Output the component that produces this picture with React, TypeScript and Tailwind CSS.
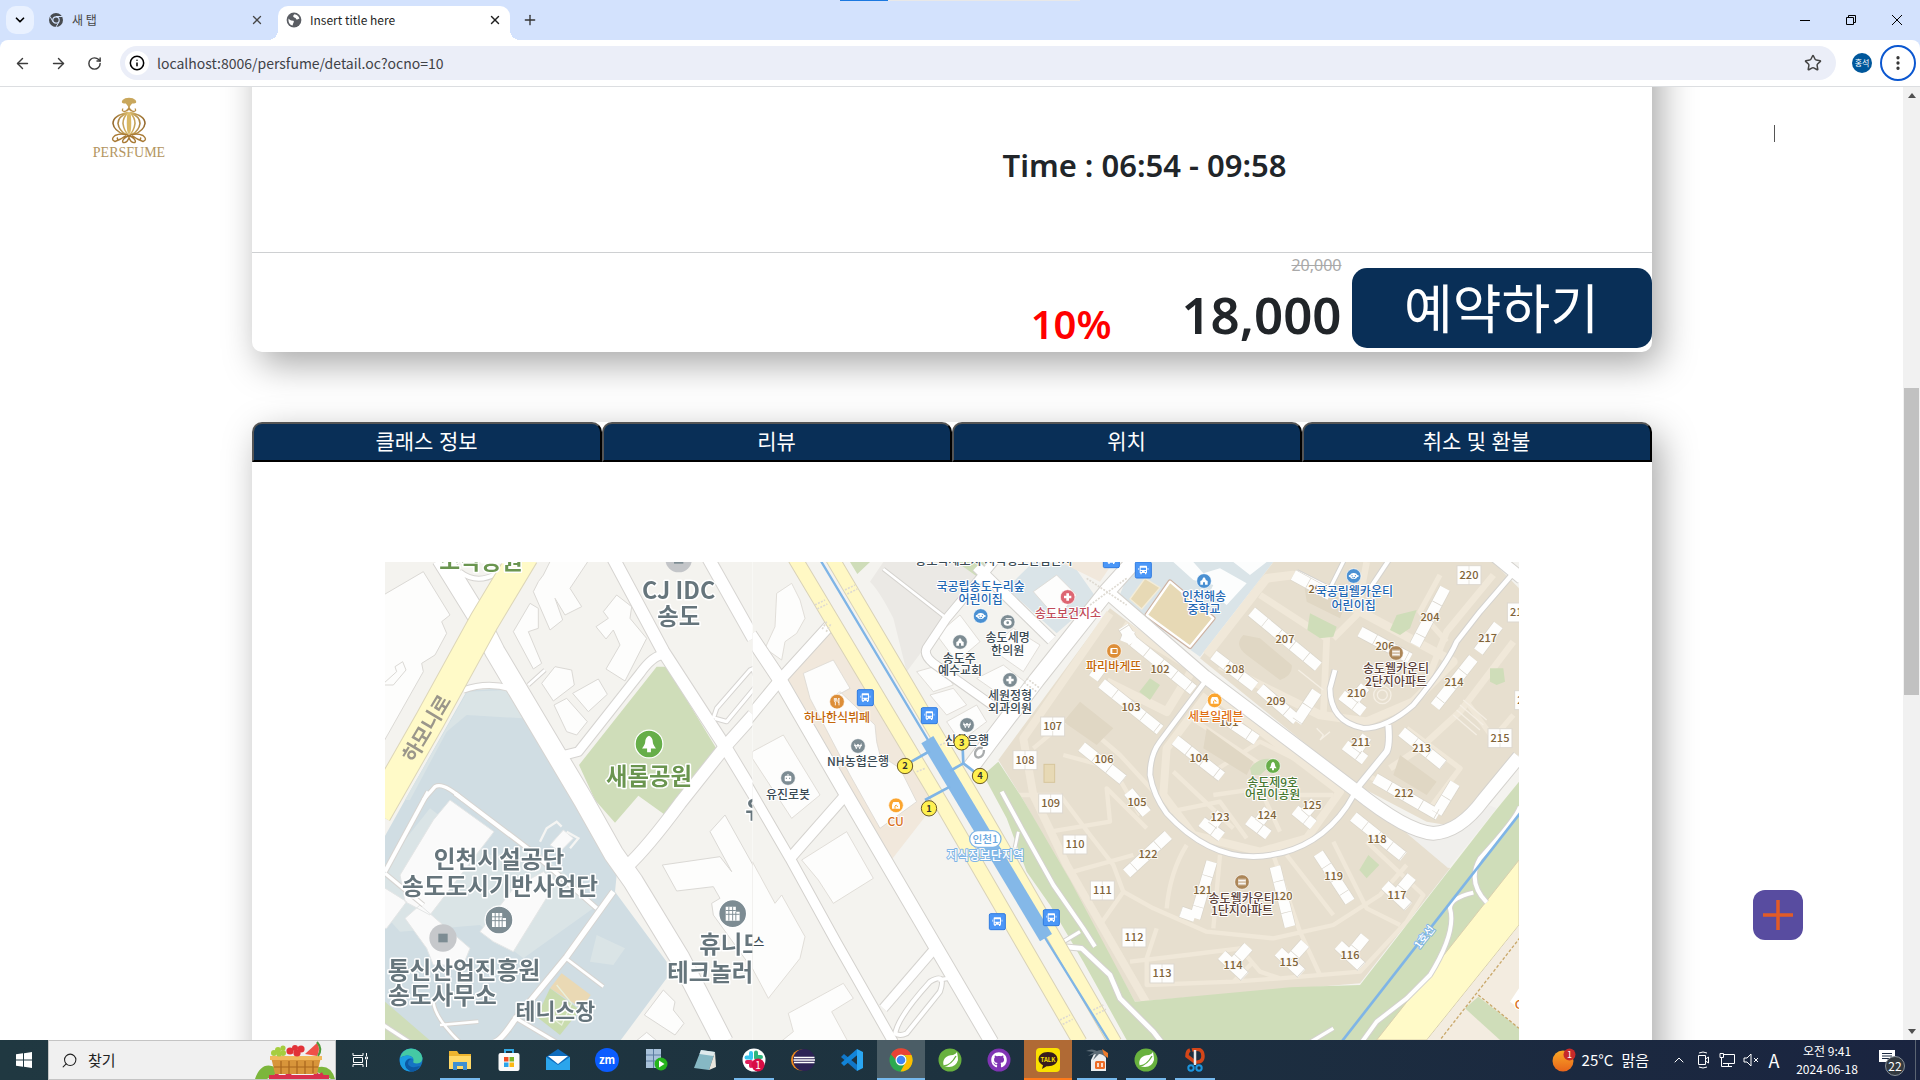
import React from "react";
import {
  ArrowLeft,
  ArrowRight,
  ChevronDown,
  ChevronUp,
  EllipsisVertical,
  Info,
  Plus,
  RotateCw,
  Search,
  Star,
  X,
} from "lucide-react";
import { FaGithub } from "react-icons/fa";

const UI = "font-['Noto_Sans','Noto_Sans_CJK_KR',sans-serif]";
const CHROME_UI = "font-['Noto_Sans_CJK_KR',sans-serif]";

/* ---------- Map ---------- */

type Kind = "won" | "cross" | "tree" | "office" | "fork" | "smile" | "bread" | "shop" | "apt" | "church" | "robot" | "camera";

function Glyph({ kind }: { kind: Kind }) {
  switch (kind) {
    case "won":
      return <path d="M-10-7 L-5 8 L0-6 L5 8 L10-7 M-12-1H12" stroke="#fff" strokeWidth="3" fill="none" />;
    case "cross":
      return <path d="M-4-11H4V-4H11V4H4V11H-4V4H-11V-4H-4Z" fill="#fff" />;
    case "tree":
      return <path d="M0-13Q6-10 6-3Q6 1 11 7H3V13H-3V7H-11Q-6 1-6-3Q-6-10 0-13Z" fill="#fff" />;
    case "office":
      return (
        <g>
          <path d="M-11-11H5V-3H11V11H-11Z" fill="#fff" />
          <path d="M-6-11V11 M0-11V11 M-11-5H5 M-11 1H11 M5-3V11" stroke="#7d8c93" strokeWidth="1.5" />
        </g>
      );
    case "fork":
      return <path d="M-8-11V-3Q-8 1-5 1V11 M-5-11V-2 M-2-11V-3Q-2 1-5 1 M6 11V-11Q1-6 3 2H6" stroke="#fff" strokeWidth="2.6" fill="none" />;
    case "smile":
      return (
        <g>
          <ellipse rx="11" ry="9" fill="#fff" />
          <circle cx="-12" r="3" fill="#fff" />
          <circle cx="12" r="3" fill="#fff" />
          <path d="M-5-3V1 M5-3V1 M-4 4Q0 7 4 4" stroke="#4a90d2" strokeWidth="3" fill="none" />
        </g>
      );
    case "bread":
      return (
        <g>
          <rect x="-11" y="-9" width="22" height="18" rx="3" fill="#fff" />
          <rect x="-5" y="-6" width="13" height="12" fill="#dd8e38" />
        </g>
      );
    case "shop":
      return (
        <g>
          <path d="M-12-2 L-8-10H8L12-2V10H-12Z" fill="#fff" />
          <path d="M-3 10V2Q0-4 4 2V5" stroke="#fba52f" strokeWidth="3" fill="none" />
        </g>
      );
    case "apt":
      return <path d="M-9-10V10 M-3-10V10 M3-10V10 M9-10V10 M-11-4H11 M-11 5H11" stroke="#fff" strokeWidth="3" />;
    case "church":
      return <path d="M-11 11V0L-5-3V-6L0-12L5-6V-3L11 0V11H3V4H-3V11Z" fill="#fff" />;
    case "robot":
      return (
        <g>
          <rect x="-10" y="-7" width="20" height="17" rx="4" fill="#fff" />
          <path d="M0-12V-7" stroke="#fff" strokeWidth="3" />
          <path d="M-5-1V3 M5-1V3" stroke="#7d8c93" strokeWidth="3" />
        </g>
      );
    case "camera":
      return (
        <g>
          <ellipse cx="0" cy="2" rx="12" ry="9" fill="#fff" />
          <path d="M-6-10H12" stroke="#fff" strokeWidth="3" />
          <circle cx="0" cy="2" r="4" fill="#7d8c93" />
        </g>
      );
  }
}

function Pin({ x, y, color, kind, k = 1 }: { x: number; y: number; color: string; kind: Kind; k?: number }) {
  return (
    <g transform={`translate(${x} ${y}) scale(${k})`}>
      <circle r="22" fill={color} stroke="#fff" strokeWidth="2" />
      <Glyph kind={kind} />
    </g>
  );
}

function T({
  x,
  y,
  c = "#3a4a53",
  s = 36,
  anchor = "middle",
  halo = "#fff",
  children,
}: {
  x: number;
  y: number;
  c?: string;
  s?: number;
  anchor?: "start" | "middle";
  halo?: string;
  children: React.ReactNode;
}) {
  return (
    <text
      x={x}
      y={y + s * 0.36}
      fontSize={s}
      fill={c}
      textAnchor={anchor}
      stroke={halo}
      strokeWidth={s > 50 ? 9 : 6}
      strokeLinejoin="round"
      paintOrder="stroke"
    >
      {children}
    </text>
  );
}

function Bus({ x, y }: { x: number; y: number }) {
  return (
    <g transform={`translate(${x} ${y})`}>
      <rect x="-24" y="-24" width="48" height="48" rx="4" fill="#4b97f7" stroke="#2f7be0" strokeWidth="3" />
      <path d="M-9-13H9Q11-13 11-10V9H9V13H5V9H-5V13H-9V9H-11V-10Q-11-13-9-13Z" fill="#fff" />
      <path d="M-8-7H8V0H-8Z M-8 3H-4V6H-8Z M4 3H8V6H4Z" fill="#4b97f7" />
      <path d="M-14-6V0 M14-6V0" stroke="#fff" strokeWidth="2" />
    </g>
  );
}

function Exit({ x, y, n }: { x: number; y: number; n: number }) {
  return (
    <g>
      <circle cx={x} cy={y} r="23" fill="#fff04f" stroke="#6a5a28" strokeWidth="3" />
      <text x={x} y={y + 10} fontSize="28" fontWeight="700" textAnchor="middle" fill="#333">
        {n}
      </text>
    </g>
  );
}

function Blk({ x, y, children }: { x: number; y: number; children: React.ReactNode }) {
  return (
    <g>
      <rect x={x - 36} y={y - 28} width="72" height="57" fill="#fefefd" stroke="#ddd8cf" strokeWidth="3" />
      <path d={`M${x} ${y - 28}v57`} stroke="#ddd8cf" strokeWidth="2" />
      <T x={x} y={y} c="#80643a" s={33}>{children}</T>
    </g>
  );
}

const FLATS_TOP = [
  "M490 60L600 120", "M365 170L565 335", "M690 230L840 310", "M945 100L855 270", "M250 300L375 395",
  "M390 400L500 495", "M560 410L500 500", "M10 260L190 405", "M-85 385L90 525", "M225 450L380 555",
  "M135 555L275 665", "M635 420L700 470", "M705 395L660 450", "M645 570L705 615", "M710 545L670 600",
  "M815 530L940 630", "M1030 310L915 455", "M1105 210L1045 290", "M735 670L925 780", "M975 685L920 775",
  "M10 262L-20 215", "M-145 575L-20 675", "M-80 330L-110 370", "M0 225L-15 262",
];
const FLATS_BOTTOM = [
  "M215 80L275 125", "M275 55L245 95", "M355 75L415 120", "M415 45L385 85", "M495 45L550 90", "M555 20L520 60",
  "M670 65L820 185", "M565 175L660 320", "M435 215L480 395", "M245 200L195 370", "M195 365L152 350", "M115 120L-10 235",
  "M765 270L835 335", "M845 245L800 300", "M625 450L695 515", "M705 425L660 480", "M445 470L515 535",
  "M525 445L480 495", "M275 480L345 545", "M355 455L310 505", "M-5 -10L50 55",
];

const LABELS_TOP: [number, number, string][] = [
  [465, 252, "207"], [900, 186, "204"], [1073, 249, "217"], [765, 273, "206"], [90, 343, "102"], [315, 343, "208"],
  [438, 438, "209"], [972, 381, "214"], [680, 414, "210"], [692, 561, "211"], [875, 579, "213"], [207, 609, "104"],
  [822, 714, "212"], [297, 500, "101"], [3, 457, "103"], [-78, 612, "106"], [564, 102, "205"],
];
const LABELS_BOTTOM: [number, number, string][] = [
  [270, 67, "123"], [411, 61, "124"], [546, 31, "125"], [741, 133, "118"], [611, 243, "119"], [459, 304, "120"],
  [218, 286, "121"], [54, 178, "122"], [801, 300, "117"], [660, 481, "116"], [477, 502, "115"], [309, 511, "114"], [21, 21, "105"],
];

const WHITE_ROADS: [string, number][] = [
  ["M1110 240L1200 375L1400 720L1835 1462", 40],
  ["M1035 575L1230 910L1368 1160L1540 1462", 28],
  ["M1350 210L1200 375L1035 575", 32],
  ["M1230 910L1390 728", 30],
  ["M1510 1360L1665 1180", 26],
  ["M1850 10L1700 190L1640 280Q1630 300 1660 325L1850 460", 24],
  ["M1510 42L1700 190", 8],
  ["M1790 35L2015 255", 30],
  ["M1770 640L1830 560L1970 375L2180 110L2270 10", 46],
  ["M2180 110L2475 365L2925 705Q3080 830 3160 835Q3240 830 3310 735L3417 605", 38],
  ["M3340 0L3425 70", 34],
  ["M2475 380L2340 560Q2310 600 2310 660Q2320 720 2360 775Q2480 905 2620 905Q2800 900 2900 755L2930 705", 14],
  ["M3395 60L3300 170L3230 260Q3200 330 3100 450Q3020 520 2950 520Q2850 500 2850 400L2865 345", 14],
  ["M3025 510Q3030 570 3020 590L2930 700", 18],
  ["M2750 50L2850 100L2895 10", 10],
  ["M2970 100L3030 10", 12],
  ["M1865 710L1925 820L2020 990L2110 1120L2145 1175", 12],
  ["M1915 830L1905 878", 8],
  ["M2050 1175L2105 1180L2190 1260L2220 1330L2320 1430L2345 1462", 14],
  ["M2050 1160L2100 1130", 10],
  ["M3420 755Q3410 790 3300 910Q3260 980 3320 1042", 12],
  ["M3280 1013Q3210 1030 3210 1060Q3230 1130 3150 1260L3080 1330L2990 1400L2945 1462", 12],
  ["M2860 1420L2790 1462", 10],
  ["M1545 1440Q1550 1390 1650 1280Q1700 1250 1680 1310L1580 1435Q1560 1445 1545 1435", 12],
  ["M1675 1275L1705 1270", 10],
];

const LEFT_ROADS: [string, number][] = [
  ["M185 10L290 180L345 290L470 500L610 735L700 895L760 980L900 1210L1030 1462", 58],
  ["M700 10L850 290L1035 575L1150 765", 36],
  ["M985 10L1120 250", 36],
  ["M1120 480L1035 575L900 745Q800 880 740 935", 36],
  ["M850 300Q820 300 780 355L595 590L555 600", 26],
  ["M250 405Q320 380 390 400", 16],
  ["M700 1010L560 1205L400 1400Q360 1460 340 1462", 16],
  ["M555 1208L670 1295", 8],
  ["M160 1340Q165 1390 240 1462 M180 1410L295 1400", 8],
  ["M225 715L450 885L650 1060", 12],
  ["M145 710L15 950", 12],
  ["M15 955L130 1050", 10],
  ["M130 735L165 695Q190 680 250 735", 10],
  ["M400 1385L530 1462", 10],
  ["M445 390L495 345", 8],
  ["M1000 490L1010 460L1110 345L1145 330 M1005 490L1040 500L1135 385L1120 345", 10],
  ["M-5 1400L90 1462", 10],
  ["M240 50Q290 90 350 55", 12],
];

function Roads({ list, casing }: { list: [string, number][]; casing: string }) {
  return (
    <g fill="none" strokeLinejoin="round">
      {list.map(([d, w], i) => <path key={`c${i}`} d={d} stroke={casing} strokeWidth={w + 6} />)}
      {list.map(([d, w], i) => <path key={`r${i}`} d={d} stroke="#fff" strokeWidth={w} />)}
    </g>
  );
}

function MapView() {
  return (
    <svg
      viewBox="15 21 3402 1434"
      role="img"
      aria-label="위치 지도"
      className="block h-auto w-full font-['Noto_Sans_CJK_KR',sans-serif] font-medium"
    >
      <defs>
        <clipPath id="west"><rect x="15" y="21" width="1102" height="1434" /></clipPath>
        <clipPath id="east"><rect x="1117" y="21" width="2300" height="1434" /></clipPath>
        <filter id="soft" x="0" y="0" width="100%" height="100%"><feGaussianBlur stdDeviation="1.8" /></filter>
      </defs>

      <g clipPath="url(#east)">
        <rect x="1117" y="21" width="2300" height="1434" fill="#f4f3ef" />
        <path d="M1510 21L1840 21L1700 190L1580 350L1540 190Q1500 110 1470 80Z" fill="#ebe9e5" />
        <path d="M1410 21H1470L1432 57Z M1730 21H1830L1810 78Z" fill="#cfddb9" />
        <path d="M1350 220L1640 700L1670 740L1530 920L1220 375Z" fill="#f1e8dc" />
        <path d="M1880 100L1960 21L2080 30L2150 130L2030 235Z M2260 21H2680L2460 305L2215 130Z" fill="#dae4e8" />
        <path d="M2040 21H2200L2160 80Z" fill="#f1e8dc" />
        <path d="M2190 160L1855 615L1930 735L2265 1340L2940 1285L3210 940L3080 820L2250 205Z" fill="#e7dfcf" />
        <path d="M2680 21H3340L3417 100V600L3260 820L3140 800L2930 690L2460 310Z" fill="#e7dfcf" />
        <path d="M3080 835L3205 940L3350 760L3300 740L3230 820Z" fill="#f0efec" />

        <g fill="none" stroke="#f0e8d9" strokeWidth="13" strokeLinejoin="round">
          <path d="M2190 175L1930 550L1960 720L2060 930L2300 1345" strokeWidth="24" />
          <path d="M2230 210L2440 340L2360 470L2180 380" strokeWidth="26" />
          <path d="M2500 420L2880 710L2780 850L2640 890L2440 840L2350 720L2360 580L2480 420" strokeWidth="24" />
          <path d="M2480 300L2660 70L2740 60L2960 180L3220 320L3100 440L2960 500L2820 480L2520 330" strokeWidth="26" />
          <path d="M2640 120L2840 250L2830 480 M2960 21L2930 180L2860 250 M3340 60L3200 230L3140 380 M3400 260L3240 470L3120 580L3030 640" strokeWidth="20" />
          <path d="M3080 520L3240 640L3150 760L2960 660 M3260 440L3340 550L3400 480 M3180 60L3120 170L3200 260" strokeWidth="16" />
          <path d="M1900 720L2040 720L2130 840L2200 930L2230 1010L2160 1110 M2010 830L2190 800L2180 700L2300 820 M2080 950L2260 900 M2050 600L2200 640L2280 780 M1960 580L2080 480L2220 600L2330 720" />
          <path d="M2230 1010L2320 1060L2480 1130L2680 1150L2860 1110L3000 1020L3080 930 M2420 870Q2370 950 2360 1060 M2520 900L2500 1120 M2680 900L2760 1130L2820 1260 M2720 900L2860 1080 M2860 860L2960 1060L3060 1110" />
          <path d="M2250 1220L2420 1200L2580 1180L2640 1250L2700 1270L2940 1250L3080 1100L3130 1020L2960 860 M2330 1120L2300 1210V1290L2560 1280L2620 1220 M2560 1280L2700 1270" />
          <path d="M2370 770L2520 740L2600 850 M2500 720L2640 700L2700 830 M2380 650L2560 820 M2700 720L2860 720" />
          <path d="M2500 650L2640 560L2760 620 M2420 480L2660 640" />
        </g>
        <g fill="#e0d7c4">
          <path d="M2590 240Q2560 270 2600 300L2700 375Q2740 360 2735 330L2640 250Z M2770 70L2900 140L2880 190L2780 140Z" />
          <path d="M2100 440L2200 520L2150 570L2050 500Z M2480 520L2620 620L2600 660L2470 580Z M3060 600L3170 680L3140 720L3040 660Z" />
        </g>
        <g fill="#cfddb9">
          <path d="M2790 175L2870 215L2860 245L2820 250L2782 225Z M3050 180L3110 165L3090 220L3060 240L3030 225Z M2310 370L2340 390L2310 435L2278 410Z M3330 340H3370L3375 380L3350 390L3330 380Z M2610 640Q2640 600 2690 615L2640 660H2615Z M2965 900L2998 930L2960 970L2938 945Z" />
          <path d="M1855 620L1810 660L1880 790L1940 950L2010 1050L2110 1220L2240 1455H3000L3417 920V680L3340 775L2940 1290L2730 1297L2265 1340L2070 975L1930 735Z" />
        </g>
        <g>
          <path d="M2370 80L2500 190L2430 275L2300 180Z" fill="#e7d9b5" stroke="#cdb2a2" strokeWidth="14" strokeLinejoin="round" />
          <path d="M2370 80L2500 190L2430 275L2300 180Z" fill="#e7d9b5" stroke="#fff" strokeWidth="7" strokeLinejoin="round" />
          <path d="M2295 70L2340 98L2285 162L2250 132Z" fill="#e7d9b5" stroke="#f3ecd8" strokeWidth="4" />
          <path d="M2380 21H2440L2470 55L2520 40L2600 85L2540 150L2490 110L2500 90L2440 75Z M2560 21H2660L2610 60Z" fill="#fcfdfd" />
          <rect x="1992" y="628" width="32" height="54" fill="#e7d9b5" stroke="#d7c69c" strokeWidth="3" />
        </g>
        <path d="M3417 915V1110L3140 1455H2990Z" fill="#fffac8" stroke="#d9cfae" strokeWidth="3" />
        <path d="M3417 1112V1455H3142Z" fill="#f3ece0" />
        <path d="M3295 1325L3417 1420V1455H3360L3255 1360Z" fill="#cfddb9" />
        <path d="M3420 1148L3180 1455 M3295 1320L3417 1420" fill="none" stroke="#c9a86a" strokeWidth="4" strokeDasharray="9 6" />
        <path d="M3390 1340L3417 1300V1360Z" fill="#fff" />

        <g fill="#fdfdfc" stroke="#dcd9d3" strokeWidth="2.5">
          <path d="M1190 115L1235 85L1260 135L1275 190L1250 235L1215 260L1205 315L1155 280L1185 215Z" />
          <path d="M1270 355L1360 315L1410 400L1355 430L1380 410L1485 510L1490 560L1500 600L1560 640L1610 740L1500 820L1410 660L1290 430Z" />
          <path d="M1117 590L1210 540L1320 720L1235 790L1117 610Z" />
          <path d="M1265 915L1400 830L1480 970L1360 1045L1315 975Z" />
          <path d="M1117 920L1185 1045L1205 1020L1275 1145L1260 1210L1165 1330L1117 1240Z" />
          <path d="M1225 1375L1390 1285L1420 1330L1355 1370L1405 1462H1200L1240 1430Z" />
          <path d="M1610 350L1680 330L1720 390L1660 410Z M1650 420L1720 400L1760 450L1700 480Z M1700 500L1790 450L1820 500L1740 560Z M1670 240L1740 180L1800 260L1730 320Z M1790 370L1870 330L1960 400L1890 440Z M1830 280L1900 220L1980 270L1930 350Z M1960 110L2030 60L2090 120L2030 190Z" />
        </g>
        <Roads list={WHITE_ROADS} casing="#d4d2ce" />

        <g fill="none">
          <path d="M1245 10L1690 755L2100 1462" stroke="#d9d2b8" strokeWidth="46" />
          <path d="M1245 10L1690 755L2100 1462" stroke="#fff8c4" strokeWidth="40" />
          <path d="M1357 10L1785 735L2205 1462" stroke="#d9d2b8" strokeWidth="44" />
          <path d="M1357 10L1785 735L2205 1462" stroke="#fff8c4" strokeWidth="38" />
          <path d="M1318 10L1650 565 M1990 1140L2188 1460" stroke="#7fb5e6" strokeWidth="7" />
          <path d="M1642 554L1998 1148" stroke="#84b8e8" strokeWidth="42" />
          <path d="M1590 622L1650 588 M1635 735L1710 695 M1710 648L1750 625L1748 580 M1750 625L1798 662" stroke="#7fb5e6" strokeWidth="8" />
          <path d="M3420 775L2885 1460" stroke="#7fb5e6" strokeWidth="8" />
          <path d="M1305 150L1335 135 M1312 162L1342 147 M1395 105L1425 90 M1402 117L1432 102 M1680 570L1705 560 M1610 650L1635 640 M2040 1395L2070 1380 M2048 1408L2078 1393 M2140 1365L2170 1350 M2148 1378L2178 1363 M1340 200L1325 225 M1352 208L1337 233 M2120 70L2240 150 M2240 70L2130 150 M1940 370L1980 400 M1932 382L1972 412" stroke="#dedad2" strokeWidth="5" strokeDasharray="6 4" />
        </g>
        <path d="M1812 585Q1812 605 1795 608Q1782 606 1786 590Q1794 574 1808 580" fill="none" stroke="#a9acad" strokeWidth="7" />

        <g transform="translate(2250 0)" fill="none">
          {FLATS_TOP.map((d) => <path key={d} d={d} stroke="#dad5ca" strokeWidth="36" />)}
          {FLATS_TOP.map((d) => <path key={d} d={d} stroke="#fefefd" strokeWidth="32" />)}
          {FLATS_TOP.map((d) => <path key={d} d={d} stroke="#d8d4cb" strokeWidth="32" strokeDasharray="2 52" strokeDashoffset="-50" />)}
          <g stroke="#f5efe4" strokeWidth="4">
            <circle cx="757" cy="420" r="26" />
            <circle cx="757" cy="420" r="15" />
            <path d="M1000 435L1070 495 M990 450L1060 510 M980 465L1050 525 M970 480L1040 540 M505 345L580 405 M560 520L580 540L570 555L600 530" />
          </g>
        </g>
        <g transform="translate(2250 720)" fill="none">
          {FLATS_BOTTOM.map((d) => <path key={d} d={d} stroke="#dad5ca" strokeWidth="36" />)}
          {FLATS_BOTTOM.map((d) => <path key={d} d={d} stroke="#fefefd" strokeWidth="32" />)}
          {FLATS_BOTTOM.map((d) => <path key={d} d={d} stroke="#d8d4cb" strokeWidth="32" strokeDasharray="2 46" strokeDashoffset="-44" />)}
        </g>

        <g transform="translate(1110 0)">
          <T x={732} y={18}>송도국제도시 지식정보산업단지</T>
          <Bus x={1084} y={14} />
          <T x={692} y={94} c="#1f68b4">국공립송도누리숲</T>
          <T x={692} y={134} c="#1f68b4">어린이집</T>
          <Pin x={692} y={183} color="#4a90d2" kind="smile" />
          <Pin x={953} y={126} color="#dd6672" kind="cross" />
          <T x={954} y={175} c="#c04a58">송도보건지소</T>
          <Pin x={773} y={201} color="#7d8c93" kind="camera" />
          <T x={773} y={248}>송도세명</T>
          <T x={773} y={288}>한의원</T>
          <Pin x={630} y={261} color="#7d8c93" kind="church" />
          <T x={628} y={310}>송도주</T>
          <T x={630} y={348}>예수교회</T>
          <Pin x={780} y={375} color="#7d8c93" kind="cross" />
          <T x={780} y={423}>세원정형</T>
          <T x={780} y={462}>외과의원</T>
          <Pin x={1092} y={288} color="#dd8e38" kind="bread" />
          <T x={1091} y={335} c="#c46608">파리바게뜨</T>
          <Pin x={261} y={440} color="#dd8e38" kind="fork" />
          <T x={261} y={489} c="#c46608">하나한식뷔페</T>
          <Bus x={346} y={428} />
          <Bus x={538} y={482} />
          <Pin x={324} y={573} color="#7d8c93" kind="won" />
          <T x={324} y={621}>NH농협은행</T>
          <Pin x={651} y={510} color="#7d8c93" kind="won" />
          <T x={651} y={558}>신한은행</T>
          <Exit x={635} y={562} n={3} />
          <Exit x={465} y={633} n={2} />
          <Exit x={690} y={663} n={4} />
          <Pin x={114} y={669} color="#7d8c93" kind="robot" />
          <T x={114} y={718}>유진로봇</T>
          <Blk x={908} y={514}>107</Blk>
          <Blk x={825} y={615}>108</Blk>
          <Blk x={902} y={745}>109</Blk>
        </g>
        <g transform="translate(1110 720)">
          <Pin x={438} y={31} color="#fba52f" kind="shop" />
          <T x={437} y={79} c="#d9701c">CU</T>
          <Exit x={537} y={40} n={1} />
          <rect x="659" y="107" width="94" height="50" rx="25" fill="#fff" stroke="#7fb5e6" strokeWidth="4" />
          <T x={706} y={131} c="#6aa8e0" s={32}>인천1</T>
          <T x={706} y={183} c="#fff" halo="#7fb5e6">지식정보단지역</T>
          <Bus x={742} y={380} />
          <Bus x={904} y={368} />
          <Blk x={975} y={148}>110</Blk>
          <Blk x={1057} y={286}>111</Blk>
          <Blk x={1152} y={427}>112</Blk>
          <T x={26} y={442}>스</T>
        </g>
        <g transform="translate(2250 0)">
          {LABELS_TOP.map(([x, y, t]) => <T key={t} x={x} y={y} c="#80643a" s={33} halo="#fbf8f2">{t}</T>)}
          <Bus x={40} y={45} />
          <Pin x={222} y={78} color="#4a90d2" kind="church" />
          <T x={222} y={124} c="#1f68b4">인천해송</T>
          <T x={222} y={165} c="#1f68b4">중학교</T>
          <Pin x={671} y={63} color="#4a90d2" kind="smile" />
          <T x={673} y={111} c="#1f68b4">국공립웰카운티</T>
          <T x={671} y={151} c="#1f68b4">어린이집</T>
          <Pin x={798} y={294} color="#ac8658" kind="apt" />
          <T x={798} y={341} c="#5b4138">송도웰카운티</T>
          <T x={798} y={381} c="#5b4138">2단지아파트</T>
          <Pin x={254} y={436} color="#fba52f" kind="shop" />
          <T x={257} y={484} c="#e06f12">세븐일레븐</T>
          <Pin x={429} y={633} color="#66ae48" kind="tree" />
          <T x={428} y={683} c="#46762f">송도제9호</T>
          <T x={428} y={720} c="#46762f">어린이공원</T>
          <Blk x={1017} y={60}>220</Blk>
          <Blk x={1110} y={549}>215</Blk>
          <Blk x={1168} y={172}>219</Blk>
          <Blk x={1190} y={435}>218</Blk>
        </g>
        <g transform="translate(2250 720)">
          {LABELS_BOTTOM.map(([x, y, t]) => <T key={t} x={x} y={y} c="#80643a" s={33} halo="#fbf8f2">{t}</T>)}
          <Pin x={336} y={261} color="#ac8658" kind="apt" />
          <T x={335} y={310} c="#5b4138">송도웰카운티</T>
          <T x={336} y={348} c="#5b4138">1단지아파트</T>
          <Blk x={96} y={535}>113</Blk>
          <g transform="translate(883 426) rotate(-52)">
            <T x={0} y={0} c="#fff" halo="#7fb5e6" s={32}>1호선</T>
          </g>
          <T x={1154} y={630} c="#d9701c" anchor="start">GS25</T>
        </g>
      </g>

      <g clipPath="url(#west)">
       <g filter="url(#soft)">
        <rect x="0" y="0" width="1130" height="1480" fill="#f4f3ef" />
        <path d="M262 405L395 400L610 735L710 960L705 1010L860 1220V1270L715 1465H0V870L75 735Z" fill="#d0dde3" />
        <path d="M262 410L390 405L430 490L260 480L200 530L90 735L75 735Z M150 760L330 900L460 880L560 960L640 1060L430 1210L300 1110L60 1130L15 1080V930Z M650 1140L735 1180L700 1230L630 1220Z" fill="#dae4e6" />
        <path d="M15 1340L160 1465H15Z" fill="#cfddb9" />
        <path d="M830 335H860L1015 590L925 720L865 787L775 722L705 803L645 735L597 630Z" fill="#cfddb9" />
        <g fill="#fdfdfc" stroke="#dbd9d5" strokeWidth="3">
          <path d="M0 126L130 50L210 180L185 200L200 235L165 300L125 325L130 350L0 580V395L50 350L45 335L68 320L78 345L40 390L0 390Z" />
          <path d="M490 60L515 10H630L570 100L605 155L555 180L525 130L548 195L510 225L460 110L475 80Z" />
          <path d="M400 230L450 145L475 160L475 220L445 230L485 325L460 342Z" />
          <path d="M670 170L710 120L755 155L750 190L800 250L735 378L678 342L720 270L700 225L678 252L648 215L685 190Z" />
          <path d="M485 385L525 335L575 345L583 390L520 438Z M578 415L655 372L682 418L625 470Z M522 450L560 430L622 500L590 540L560 530Z" />
          <path d="M990 830L1035 780L1130 950V1260L1000 1080L995 1045L1020 1030L1000 995L890 1008L847 930L1020 905L1055 950Z" />
          <path d="M793 1380L850 1305L885 1340L880 1365L912 1405L885 1440Z M760 1465L800 1432L840 1465Z" />
        </g>
        <g fill="#fafafa" stroke="#e4e6e6" strokeWidth="3">
          <path d="M160 795L210 735L342 830L250 950L150 1080L75 1040L60 960Z M300 1130L400 1000L490 950L530 980L400 1190L340 1160Z M0 990L80 1040L20 1120H0Z M75 1090L120 1050L270 1180L250 1230H160L140 1180Z" />
          <path d="M510 870L550 825L580 850L540 890Z" />
        </g>
        <path d="M480 860L500 820L530 800L545 815 M560 830L595 850L570 880" fill="none" stroke="#f5f5f3" strokeWidth="7" />
        <path d="M545 1255L632 1320L605 1360L510 1300Z" fill="#ead9b4" />
        <path d="M510 1300L600 1365L540 1440L470 1385Z" fill="#c9dcae" />
        <path d="M530 1290L575 1345L545 1410L490 1370" fill="none" stroke="#e9f0dc" strokeWidth="4" />
        <Roads list={LEFT_ROADS} casing="#d6d4d1" />
        <path d="M432 0L312 200L150 495L-10 775" fill="none" stroke="#ddd6b8" strokeWidth="92" />
        <path d="M432 0L312 200L150 495L-10 775" fill="none" stroke="#fffac8" strokeWidth="86" />

        <g fontWeight="700">
          <T x={303} y={17} c="#6a9550" s={68}>조각공원</T>
          <circle cx="896" cy="12" r="40" fill="#c3c5c8" />
          <rect x="882" y="2" width="28" height="24" fill="#7d8c93" />
          <T x={896} y={108} c="#66757c" s={70}>CJ IDC</T>
          <T x={896} y={184} c="#66757c" s={70}>송도</T>
          <Pin x={807} y={567} color="#66ae48" kind="tree" k={1.9} />
          <T x={807} y={664} c="#6a9550" s={70}>새롬공원</T>
          <g transform="translate(140 520) rotate(-59)">
            <T x={0} y={0} c="#9a968a" s={60} halo="#fffac8">하모니로</T>
          </g>
          <T x={357} y={914} c="#66757c" s={71}>인천시설공단</T>
          <T x={360} y={994} c="#66757c" s={71}>송도도시기반사업단</T>
          <Pin x={357} y={1095} color="#7d8c93" kind="office" k={1.9} />
          <circle cx="189" cy="1149" r="41" fill="#c6c8cb" />
          <rect x="175" y="1136" width="28" height="26" fill="#7d8c93" />
          <T x={252} y={1246} c="#66757c" s={71}>통신산업진흥원</T>
          <T x={187} y={1322} c="#66757c" s={71}>송도사무소</T>
          <T x={526} y={1370} c="#66757c" s={65}>테니스장</T>
          <Pin x={1058} y={1076} color="#7d8c93" kind="office" k={1.9} />
          <T x={958} y={1168} c="#66757c" s={70} anchor="start">휴니드</T>
          <T x={862} y={1252} c="#66757c" s={70} anchor="start">테크놀러지</T>
          <T x={1096} y={765} c="#66757c" s={70} anchor="start">유진로봇</T>
        </g>
       </g>
      </g>
    </svg>
  );
}

/* ---------- Browser chrome ---------- */

function ChromeMark() {
  return (
    <svg viewBox="0 0 16 16" className="size-4 shrink-0">
      <circle cx="8" cy="8" r="7" fill="#474b50" />
      <circle cx="8" cy="8" r="3.2" fill="#474b50" stroke="#d3e2fd" strokeWidth="1.2" />
      <path d="M8 4.5H14.3 M5 9.8L2 4.4 M11 9.8L8 15" stroke="#d3e2fd" strokeWidth="1" />
    </svg>
  );
}

function Globe() {
  return (
    <svg viewBox="0 0 16 16" className="size-4 shrink-0">
      <circle cx="8" cy="8" r="7.4" fill="#5a5d63" />
      <path d="M2.5 6.5Q4 9 7 8.6Q8.5 9 7.6 10.6Q7 11.4 6.6 13.6Q3 12.5 2.5 9Z M8.4 2.2Q6 4.4 8.2 5.4Q10 5.4 10.2 7.2Q12 7.8 13.4 6.6Q12.6 3 8.4 2.2Z" fill="#fff" />
    </svg>
  );
}

function TabStrip() {
  return (
    <div className={`relative flex h-10 shrink-0 items-end bg-[#d3e2fd] pl-1.5 ${CHROME_UI}`}>
      <div className="absolute left-1/2 top-0 flex h-px w-60 -translate-x-[120px]">
        <span className="w-12 bg-[#1a78e0]" />
        <span className="flex-1 bg-[#e8e8e8]" />
      </div>
      <button aria-label="탭 검색" className="mb-1.5 flex size-7 items-center justify-center rounded-[10px] bg-[#e9f1ff]">
        <ChevronDown size={14} strokeWidth={3} />
      </button>
      <div className="flex h-[34px] w-[244px] items-center gap-2 pb-1.5 pl-3.5 pr-3.5 text-xs text-[#474747]">
        <ChromeMark />
        <span className="flex-1">새 탭</span>
        <button aria-label="새 탭 닫기"><X size={14} strokeWidth={2.2} /></button>
      </div>
      <div className="relative flex h-[34px] w-[232px] items-center gap-2 rounded-t-[10px] bg-white pb-1.5 pl-2 pr-2 text-xs text-[#1f1f1f]">
        <span className="absolute -left-2.5 bottom-0 size-2.5 bg-[radial-gradient(circle_at_0_0,transparent_10px,#fff_10px)]" />
        <span className="absolute -right-2.5 bottom-0 size-2.5 bg-[radial-gradient(circle_at_100%_0,transparent_10px,#fff_10px)]" />
        <Globe />
        <span className="flex-1">Insert title here</span>
        <button aria-label="탭 닫기"><X size={14} strokeWidth={2.4} /></button>
      </div>
      <button aria-label="새 탭 열기" className="mb-1.5 ml-1.5 flex size-7 items-center justify-center text-[#333]"><Plus size={16} /></button>
      <div className="ml-auto flex h-10">
        <button aria-label="최소화" className="flex w-[46px] items-center justify-center"><svg viewBox="0 0 10 10" className="size-2.5"><path d="M0 5.5H10" stroke="#000" /></svg></button>
        <button aria-label="이전 크기로" className="flex w-[46px] items-center justify-center"><svg viewBox="0 0 10 10" className="size-2.5"><path d="M.5 2.5H7.5V9.5H.5Z M2.5 2.5V.5H9.5V7.5H7.5" fill="none" stroke="#000" /></svg></button>
        <button aria-label="닫기" className="flex w-[46px] items-center justify-center"><svg viewBox="0 0 10 10" className="size-2.5"><path d="M0 0L10 10M10 0L0 10" stroke="#000" /></svg></button>
      </div>
    </div>
  );
}

function Toolbar() {
  return (
    <div className={`shrink-0 bg-[#d3e2fd] ${CHROME_UI}`}>
      <div className="flex h-[47px] items-center rounded-t-lg border-b border-[#dcdee1] bg-white pl-1 pr-1">
        <button aria-label="뒤로" className="flex size-9 items-center justify-center text-[#3c3c3c]"><ArrowLeft size={17} /></button>
        <button aria-label="앞으로" className="flex size-9 items-center justify-center text-[#3c3c3c]"><ArrowRight size={17} /></button>
        <button aria-label="새로고침" className="flex size-9 items-center justify-center text-[#3c3c3c]"><RotateCw size={15} strokeWidth={2.3} /></button>
        <div className="ml-2 flex h-[34px] flex-1 items-center rounded-full bg-[#ebeef8] pl-[5px] pr-[14px]">
          <button aria-label="사이트 정보" className="flex size-6 items-center justify-center rounded-full bg-white"><Info size={16} strokeWidth={2.3} /></button>
          <input aria-label="주소" defaultValue="localhost:8006/persfume/detail.oc?ocno=10" className="ml-2 flex-1 bg-transparent text-sm text-[#3f4247] outline-none" />
          <button aria-label="북마크" className="text-[#444]"><Star size={18} /></button>
        </div>
        <button aria-label="프로필" className="ml-4 flex size-5 items-center justify-center rounded-full bg-[#00579b] text-[8px] text-white">홍석</button>
        <button aria-label="메뉴" className="ml-2 flex size-9 items-center justify-center rounded-full border-2 border-[#0b57d0] text-[#333]"><EllipsisVertical size={18} strokeWidth={2.4} /></button>
      </div>
    </div>
  );
}

/* ---------- Page ---------- */

function Logo() {
  return (
    <a href="#home" className="absolute left-[90px] top-2.5 flex w-[78px] flex-col items-center">
      <svg viewBox="0 0 40 48" className="h-[49px] w-10" fill="none" stroke="#a87a35" strokeWidth="1.3">
        <defs>
          <linearGradient id="gold" gradientUnits="userSpaceOnUse" x1="4" x2="36" y1="0" y2="0"><stop offset="0" stopColor="#94682c" /><stop offset=".5" stopColor="#dfc071" /><stop offset="1" stopColor="#94682c" /></linearGradient>
        </defs>
        <path d="M20 9L17 5Q12 6 14 3Q16 1 20 1Q24 1 26 3Q28 6 23 5Z" fill="#c9a75c" stroke="#c9a75c" />
        <path d="M20 9V13 M14 11Q12 14 16 14Q19 13 20 10Q21 13 24 14Q28 14 26 11" stroke="#b98f48" />
        <ellipse cx="20" cy="25.5" rx="1.6" ry="10.5" fill="#d9b864" stroke="#d9b864" />
        <path d="M19 15Q4 18 4 26Q5 33 15 37 M19 15Q9 19 9 26Q10 33 17 37 M19 15Q14 20 14 26Q15 33 19 37 M21 15Q36 18 36 26Q35 33 25 37 M21 15Q31 19 31 26Q30 33 23 37 M21 15Q26 20 26 26Q25 33 21 37" stroke="url(#gold)" strokeWidth="1.6" />
        <path d="M20 38Q13 35 6 38Q1 42 6 44Q10 43 8 40 M20 38Q27 35 34 38Q39 42 34 44Q30 43 32 40 M6 44Q12 42 17 38 M34 44Q28 42 23 38 M20 38Q12 42 14 45Q18 46 20 40Q22 46 26 45Q28 42 20 38" strokeWidth="1.4" />
      </svg>
      <span className="font-['Liberation_Serif',serif] text-sm leading-[14px] text-[#b39560]">PERSFUME</span>
    </a>
  );
}

const CARD = "mx-auto w-[1400px] max-w-full bg-white shadow-[8px_12px_36px_rgba(0,0,0,0.35)]";

function Page() {
  return (
    <main className="relative min-w-0 flex-1 overflow-hidden bg-white text-[#212529]">
      <section className={`${CARD} -mt-20 rounded-b-[10px] pt-20`}>
        <div className="flex h-[166px] items-center justify-center border-b border-[#ced0d2] pb-2.5 pl-[386px]">
          <h2 className="text-[31px] leading-9 font-semibold">Time : 06:54 - 09:58</h2>
        </div>
        <div className="flex h-[99px] items-end justify-end pb-1">
          <span className="text-[40px] leading-[48px] font-semibold text-[#ff0000]">10%</span>
          <div className="ml-[70px] mr-[10px] flex flex-col items-end">
            <del className="text-base leading-6 text-[#a9a9a9]">20,000</del>
            <strong className="-mb-1 text-[51px] leading-[75px] font-semibold">18,000</strong>
          </div>
          <button className="h-20 w-[300px] rounded-[15px] bg-[#092f57] text-[53px] leading-none text-white">예약하기</button>
        </div>
      </section>

      <section className={`${CARD} mt-[70px] rounded-t-[10px] pb-24`}>
        <nav className="grid grid-cols-4">
          {["클래스 정보", "리뷰", "위치", "취소 및 환불"].map((t) => (
            <button key={t} className="h-10 rounded-t-[10px] border-2 border-b-black border-l-[#555] border-r-black border-t-[#555] bg-[#092f57] pb-0.5 text-[21px] leading-none text-white">
              {t}
            </button>
          ))}
        </nav>
        <div className="mx-auto mt-[100px] w-[81%]"><MapView /></div>
      </section>

      <Logo />
      <span className="absolute right-32 top-[38px] h-[17px] w-px bg-[#555]" />
      <button aria-label="추가" className="absolute bottom-[100px] right-[100px] flex size-[50px] items-center justify-center rounded-xl bg-[#584ca0]">
        <svg viewBox="0 0 30 30" className="size-[30px]"><path d="M0 15H30M15 0V30" stroke="#e25b26" strokeWidth="3.5" /></svg>
      </button>
    </main>
  );
}

function ScrollBar() {
  return (
    <div aria-hidden="true" className="flex w-[17px] shrink-0 flex-col items-center bg-[#f1f1f1] py-1.5">
      <svg viewBox="0 0 8 5" className="h-[5px] w-2"><path d="M0 5L4 0L8 5Z" fill="#505050" /></svg>
      <div className="flex w-full flex-1 flex-col px-px pt-0.5">
        <div className="basis-[31%]" />
        <div className="basis-[33%] bg-[#c1c1c1]" />
      </div>
      <svg viewBox="0 0 8 5" className="h-[5px] w-2"><path d="M0 0L4 5L8 0Z" fill="#505050" /></svg>
    </div>
  );
}

/* ---------- Taskbar ---------- */

const Leaf = () => (
  <g>
    <circle cx="12" cy="12" r="11.5" fill="#68b13e" />
    <path d="M19 4Q20 9 20 12Q18 19 11 19Q8 19 6 18Q4 14 7 10Q10 7 15 7Q18 6 19 4Z" fill="#fff" />
    <path d="M6 18Q13 17 18 8" stroke="#68b13e" strokeWidth="1.3" fill="none" />
  </g>
);

const APPS: { name: string; art: React.ReactNode; state?: "open" | "active" | "alert" }[] = [
  { name: "Edge", art: <g><circle cx="12" cy="12" r="11.5" fill="#1574c4" /><path d="M1 10Q3 1 12 .5Q22 1 23.5 10Q23.5 15 18 15.5Q13 15 14.5 13Q15 8 9 7.5Q4 7 1 10Z" fill="#45c9a4" /><path d="M1 10Q5 7 9 7.5Q13 8 14 11Q9 10 8.5 15Q9 21 16 22Q6 26 1.5 17Q.5 13 1 10Z" fill="#1b9de2" /><path d="M14 11Q9 11 9 16Q11 21 21 18Q17 24 12 23.5Q5 20 6 15Q8 9 14 11Z" fill="#0c59a4" /></g> },
  { name: "파일 탐색기", state: "open", art: <g><path d="M1 3H9L11 6H23V21H1Z" fill="#ecb42f" /><path d="M1 8H23V21H1Z" fill="#ffd968" /><path d="M5 14H19V22H15V18H9V22H5Z" fill="#3f8fd2" /></g> },
  { name: "Store", art: <g><path d="M8 6V2H16V6" fill="none" stroke="#34a9e5" strokeWidth="2" /><rect x="1.5" y="5" width="21" height="18" rx="2" fill="#fafafa" /><path d="M7 9H11.5V13.5H7Z" fill="#ef4e24" /><path d="M12.5 9H17V13.5H12.5Z" fill="#7bb52a" /><path d="M7 14.5H11.5V19H7Z" fill="#2aa4ea" /><path d="M12.5 14.5H17V19H12.5Z" fill="#fbb814" /></g> },
  { name: "메일", art: <g><path d="M0 9L12 1L24 9V22H0Z" fill="#0f6cbd" /><path d="M2 8H22L12 16Z" fill="#fff" /><path d="M0 9L12 17L24 9V22H0Z" fill="#2ba5ec" /></g> },
  { name: "Zoom", art: <g><circle cx="12" cy="12" r="12" fill="#0b5cff" /><text x="12" y="16" fontSize="11" fontWeight="700" textAnchor="middle" fill="#fff">zm</text></g> },
  { name: "서버 관리자", art: <g><path d="M2 1H17V20H2Z" fill="#a9c2da" /><path d="M2 7H17M2 13H17M9.5 1V20" stroke="#5c7da1" /><circle cx="17" cy="16" r="6.5" fill="#25b41c" /><path d="M15 12.5L20.5 16L15 19.5Z" fill="#fff" /></g> },
  { name: "메모장", art: <g><path d="M8 2L22 4L16 22L1 20Z" fill="#86b8c4" /><path d="M8 2L22 4L20.500 8L6.500 6Z" fill="#dfeaec" /><path d="M16 22L22 4L23 19Z" fill="#e9e6dd" /></g> },
  { name: "Slack", state: "open", art: <g strokeWidth="4" strokeLinecap="round"><circle cx="12" cy="12" r="11.5" fill="#fff" /><path d="M9 5V10M4.5 9.5H9" stroke="#36c5f0" /><path d="M14 4.5V10M14 9H19" stroke="#2eb67d" /><path d="M9 14H5M9 14V18" stroke="#e01e5a" /><circle cx="16" cy="17" r="6.5" fill="#d80d45" /><text x="16" y="21" fontSize="10" textAnchor="middle" fill="#fff" stroke="none">1</text></g> },
  { name: "Eclipse", art: <g><circle cx="10.5" cy="12" r="10.5" fill="#f18b1e" /><circle cx="13" cy="12" r="11" fill="#2c2255" /><path d="M3 9.5H23.5M2.5 12H24M3 14.5H23.5" stroke="#fff" strokeWidth="1.5" /></g> },
  { name: "VS Code", art: <g><path d="M17 23L1 9L4 6L18 17.5Z" fill="#1177c9" /><path d="M17 1L1 15L4 18L18 6.5Z" fill="#1284d8" /><path d="M17 1L23 4V20L17 23Z" fill="#2aa6f2" /></g> },
  { name: "Chrome", state: "active", art: <g><circle cx="12" cy="12" r="11.5" fill="#2da94f" /><path d="M2 6.3A11.5 11.5 0 0 1 22.5 7H12A5 5 0 0 0 7 12Z" fill="#e94235" /><path d="M22.5 7A11.5 11.5 0 0 1 11.5 23.5L16.5 14.5A5 5 0 0 0 15 7Z" fill="#fdbd00" /><circle cx="12" cy="12" r="5.5" fill="#fff" /><circle cx="12" cy="12" r="4.3" fill="#4285f4" /></g> },
  { name: "Spring Tools", art: <Leaf /> },
  { name: "GitHub Desktop", art: <g><circle cx="12" cy="12" r="11.5" fill="#8034b4" /><FaGithub x={4} y={4} width={16} height={16} color="#fff" /></g> },
  { name: "KakaoTalk", state: "alert", art: <g><rect width="24" height="24" rx="4" fill="#fae100" /><path d="M12 4C6 4 2.5 7.5 2.5 11.3Q2.5 15 7 17.2L6 21L10.5 18.2C17 18.8 21.5 15.5 21.5 11.3C21.5 7.5 18 4 12 4Z" fill="#371d1e" /><text x="12" y="13.5" fontSize="6" fontWeight="700" textAnchor="middle" fill="#fae100">TALK</text></g> },
  { name: "Oven", state: "open", art: <g><path d="M10 4H21V23H6V12Z" fill="#eceef0" /><path d="M1 3Q7 0 12 3Q18 0 22 6L21 10Q18 6 14 6L8 12L11 6L3 8L9 4Z" fill="#5d6c77" /><path d="M17 1L23 5V10L19 7Z" fill="#ed7a2b" /><rect x="10" y="13" width="10" height="8" rx="1.5" fill="#ed6c26" /><path d="M13 15V19M17 15V19" stroke="#fff" strokeWidth="1.5" /></g> },
  { name: "Spring Boot", state: "open", art: <Leaf /> },
  { name: "캡처 도구", state: "open", art: <g fill="none"><path d="M9 2Q20-1 20 8Q20 15 12 14L4 8Q4 3 7 2" stroke="#d34619" strokeWidth="3.5" /><path d="M12 2V17" stroke="#e8eaec" strokeWidth="2.5" /><circle cx="8" cy="20" r="2.7" stroke="#1c95dd" strokeWidth="2" /><circle cx="16" cy="20" r="2.7" stroke="#1c95dd" strokeWidth="2" /></g> },
];

const CELL = {
  none: "",
  open: "after:absolute after:bottom-0 after:inset-x-1 after:h-0.5 after:bg-[#76b9ed]",
  active: "bg-[#4b5d66] after:absolute after:bottom-0 after:inset-x-0 after:h-0.5 after:bg-[#76b9ed]",
  alert: "bg-[#b06a35] after:absolute after:bottom-0 after:inset-x-0 after:h-0.5 after:bg-[#ff7a1a]",
};

function Basket() {
  return (
    <svg viewBox="0 0 80 38" className="h-[38px] w-20 shrink-0 self-end">
      <path d="M0 38Q6 20 20 26Q40 12 64 26Q76 24 80 38Z" fill="#7cb63c" />
      <path d="M12 38L26 30H60L76 38Z" fill="#f2f2f2" />
      <path d="M20 33L26 38M30 30L38 38M58 30L66 38M68 33L60 38M14 36H74" stroke="#d9304d" strokeWidth="4" />
      <path d="M16 16H66L62 33H20Z" fill="#d8953a" />
      <path d="M15 15H67V19H15Z" fill="#f0b95c" />
      <path d="M26 20V33M34 20V33M42 20V33M50 20V33M58 20V32M19 26H63" stroke="#a8661d" strokeWidth="1.2" />
      <g fill="#a5cd3f"><circle cx="19" cy="12" r="3" /><circle cx="23" cy="9" r="3" /><circle cx="28" cy="12" r="3" /><circle cx="28" cy="7" r="2.6" /><circle cx="24" cy="13" r="2.6" /></g>
      <g fill="#e23238"><circle cx="35" cy="10" r="3.6" /><circle cx="42" cy="12" r="3.6" /><circle cx="46" cy="8" r="3.6" /><circle cx="40" cy="7" r="3" /></g>
      <path d="M50 13L62 2Q66 8 62 15Z" fill="#ef5148" />
      <path d="M62 1Q68 8 63 15" fill="none" stroke="#4c9a38" strokeWidth="2" />
    </svg>
  );
}

function Taskbar() {
  return (
    <footer className={`flex h-10 shrink-0 items-stretch bg-linear-to-r from-[#203841] via-[#1d323f] to-[#1a2440] text-white ${CHROME_UI}`}>
      <button aria-label="시작" className="flex w-12 items-center justify-center">
        <svg viewBox="0 0 16 16" className="size-4"><path d="M0 2.3L7 1.3V7.5H0Z M8 1.2L16 0V7.5H8Z M0 8.5H7V14.7L0 13.7Z M8 8.5H16V16L8 14.8Z" fill="#fff" /></svg>
      </button>
      <label className="flex w-72 items-center border border-[#c4c4c4] bg-[#f0f0f0] pl-3 text-[#222]">
        <Search size={17} strokeWidth={1.5} className="-scale-x-100" />
        <input aria-label="검색" placeholder="찾기" className="ml-2.5 min-w-0 flex-1 bg-transparent text-[15px] outline-none placeholder:text-[#222]" />
        <Basket />
      </label>
      <button aria-label="작업 보기" className="flex w-12 items-center justify-center">
        <svg viewBox="0 0 17 16" className="h-4 w-[17px]" fill="none" stroke="#fff"><path d="M1 1V3.5H11V1 M1.5 5.5H10.5V10.5H1.5Z M1 15V12.5H11V15 M14.5 1V4 M14.5 8V15 M13.5 5H15.5V7H13.5Z" /></svg>
      </button>
      <div className="ml-[3px] flex gap-px">
        {APPS.map((a) => (
          <button key={a.name} aria-label={a.name} className={`relative flex w-12 items-center justify-center ${CELL[a.state ?? "none"]}`}>
            <svg viewBox="0 0 24 24" className="size-6">{a.art}</svg>
          </button>
        ))}
      </div>
      <div className="ml-auto flex items-center text-[15px]">
        <svg viewBox="0 0 24 24" className="mr-1.5 size-6"><defs><linearGradient id="sun" x2="0" y2="1"><stop stopColor="#f9a825" /><stop offset="1" stopColor="#e8641b" /></linearGradient></defs><circle cx="11" cy="13" r="10.5" fill="url(#sun)" /><circle cx="17.5" cy="6.5" r="6" fill="#c62a2a" /><text x="17.5" y="10" fontSize="9" textAnchor="middle" fill="#fff">1</text></svg>
        <span className="mr-2">25°C</span>
        <span>맑음</span>
        <ChevronUp size={16} strokeWidth={1.5} className="ml-[22px]" />
        <svg viewBox="0 0 16 20" className="ml-2 h-5 w-4" fill="none" stroke="#fff"><path d="M4 3Q8 1 12 3 M4 17Q8 19 12 17 M3.5 5.5H10.5V14.5H3.5Z M10.5 9L13.5 7V13L10.5 11" /></svg>
        <svg viewBox="0 0 16 16" className="ml-2 size-4" fill="none" stroke="#fff"><path d="M4 2.5H15.5V11.5H4 M1 1.5H4.5V5.5H1Z M2.5 5.5V14.5H8 M9.5 11.5V14.5 M7 14.5H13" /></svg>
        <svg viewBox="0 0 16 16" className="ml-2 size-4" fill="none" stroke="#fff"><path d="M1 6H4L8 2V14L4 10H1Z M11 6L15 10 M15 6L11 10" /></svg>
        <span className="ml-2 w-3.5 text-center text-lg">A</span>
        <span className="ml-2.5 flex w-[72px] flex-col items-center text-xs leading-[18px]">
          <span className="whitespace-nowrap">오전 9:41</span>
          <span className="whitespace-nowrap">2024-06-18</span>
        </span>
        <span className="relative ml-4 mr-3 flex size-6 items-center">
          <svg viewBox="0 0 16 16" className="size-4 -translate-y-0.5"><path d="M0 0H16V12H13V16L9 12H0Z" fill="#fff" /><path d="M3 3.5H13M3 6H13M3 8.5H13" stroke="#1b2a40" /></svg>
          <span className="absolute left-1.5 top-2 flex size-5 items-center justify-center rounded-full border border-[#8a929a] bg-[#33393f] text-xs leading-none">22</span>
        </span>
        <span className="mr-1 h-10 w-px bg-[#5b6472]" />
      </div>
    </footer>
  );
}

export default function App() {
  return (
    <div className={`flex h-screen flex-col overflow-hidden ${UI}`}>
      <TabStrip />
      <Toolbar />
      <div className="flex min-h-0 flex-1">
        <Page />
        <ScrollBar />
      </div>
      <Taskbar />
    </div>
  );
}
